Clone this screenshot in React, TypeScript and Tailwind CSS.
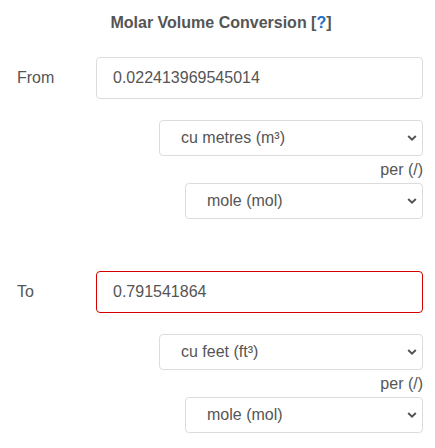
import React from "react";

function Chevron() {
  return (
    <svg width="10" height="7" viewBox="0 0 10 7" className="absolute right-[5px] top-1/2 -translate-y-1/2">
      <path d="M1.2 1.5 L5 5.2 L8.8 1.5" fill="none" stroke="#555" strokeWidth="2" />
    </svg>
  );
}

function Select({ text, indent }: { text: string; indent: boolean }) {
  return (
    <div className={`relative h-[36px] rounded-[4px] border border-[#dcdcdc] bg-white flex items-center pl-[21px] ${indent ? "ml-[168px]" : "ml-[142px]"}`}>
      <span className="text-[16px] text-[#555]">{text}</span>
      <Chevron />
    </div>
  );
}

function Block({ label, value, red, unit }: { label: string; value: string; red?: boolean; unit: string }) {
  return (
    <div className="flex flex-col">
      <div className="flex items-center">
        <div className="w-[79px] text-[16px] text-[#555]">{label}</div>
        <div className={`flex-1 h-[42px] rounded-[4px] border flex items-center pl-[16px] text-[16px] text-[#555] ${red ? "border-[#d40000]" : "border-[#dcdcdc]"}`}>
          {value}
        </div>
      </div>
      <div className="mt-[21px]">
        <Select text={unit} indent={false} />
      </div>
      <div className="h-[27px] flex items-center justify-end text-[16px] text-[#555]">per (/)</div>
      <Select text="mole (mol)" indent />
    </div>
  );
}

export default function App() {
  return (
    <div className="w-[435px] h-[448px] bg-white pl-[17px] pr-[12px] font-['Liberation_Sans',Arial,sans-serif]">
      <div className="h-[44px] pt-[14px] text-center text-[16px] font-bold text-[#555] leading-[18px] pl-[2px]">
        Molar Volume Conversion [<span className="text-[#1a6fcf]">?</span>]
      </div>
      <div className="mt-[13px]">
        <Block label="From" value="0.022413969545014" unit="cu metres (m³)" />
      </div>
      <div className="mt-[52px]">
        <Block label="To" value="0.791541864" unit="cu feet (ft³)" red />
      </div>
    </div>
  );
}
